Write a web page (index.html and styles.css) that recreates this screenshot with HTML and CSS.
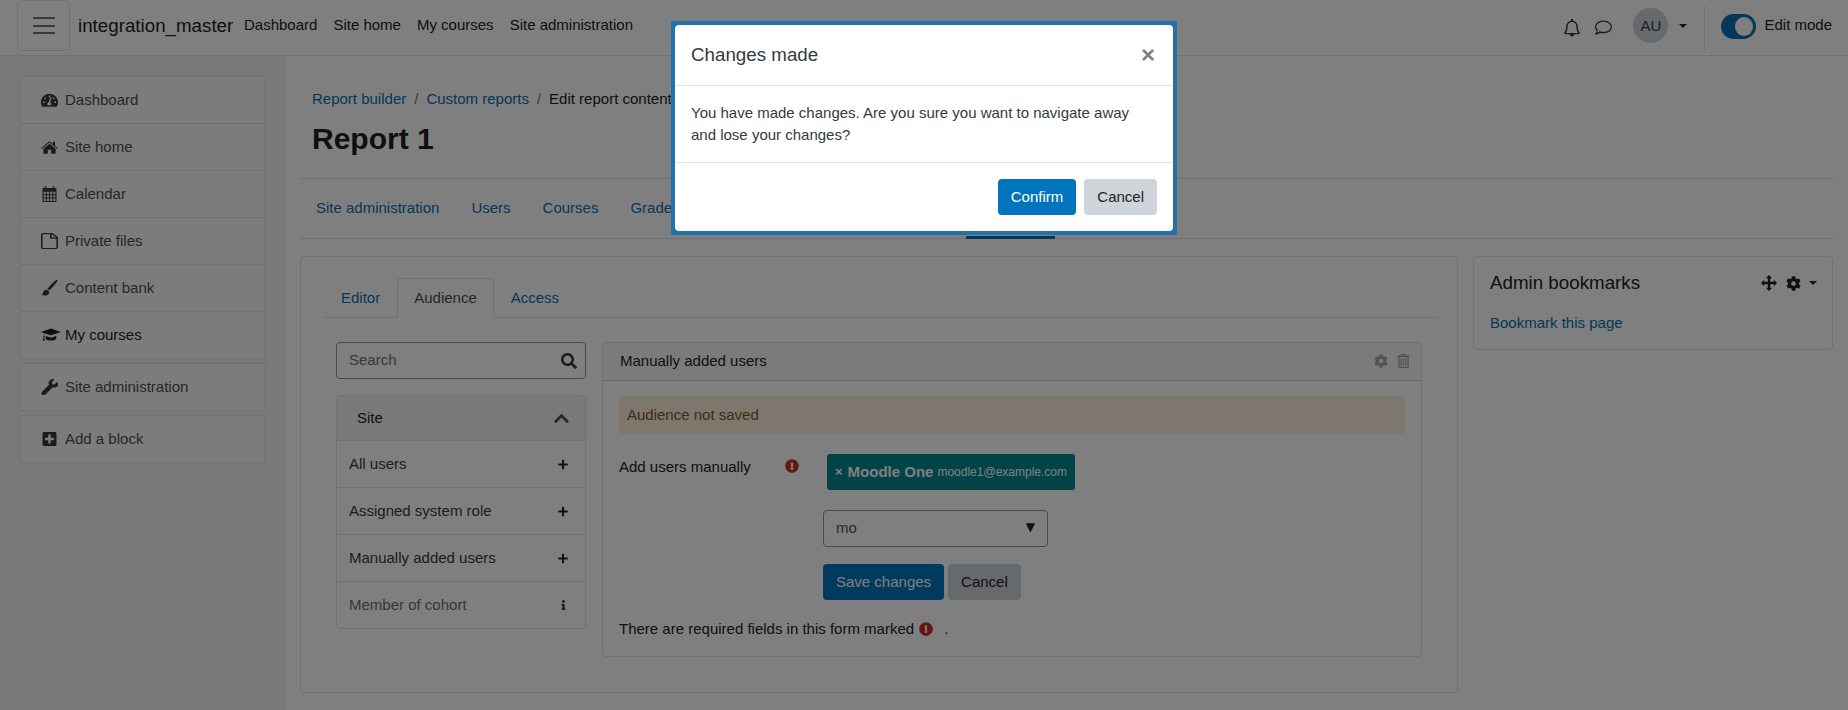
FILE: index.html
```html
<!DOCTYPE html>
<html lang="en">
<head>
<meta charset="utf-8">
<title>Edit report content</title>
<link rel="stylesheet" href="styles.css">
</head>
<body>
<svg class="defs" aria-hidden="true">
  <symbol id="i-gauge" viewBox="0 0 576 512"><path d="M288 40C129 40 0 169 0 328c0 53 14 102 39 145 6 9 16 15 27 15h444c11 0 21-6 27-15 25-43 39-92 39-145C576 169 447 40 288 40zm0 64c18 0 32 14 32 32s-14 32-32 32-32-14-32-32 14-32 32-32zM96 360c-18 0-32-14-32-32s14-32 32-32 32 14 32 32-14 32-32 32zm48-128c-18 0-32-14-32-32s14-32 32-32 32 14 32 32-14 32-32 32zm204 202H228c-8-12-12-26-12-42 0-33 21-62 50-73l50-150c4-12 17-19 30-15 13 4 19 17 15 30l-50 150c22 13 37 36 37 58 0 16-4 30 0 42zm84-202c-18 0-32-14-32-32s14-32 32-32 32 14 32 32-14 32-32 32zm48 128c-18 0-32-14-32-32s14-32 32-32 32 14 32 32-14 32-32 32z"/></symbol>
  <symbol id="i-home" viewBox="0 0 576 512"><path d="M288 60 8 290l22 28 258-212 258 212 22-28-94-77V80h-72v73zM288 146 80 316v156c0 9 7 16 16 16h136V352h112v136h136c9 0 16-7 16-16V316z"/></symbol>
  <symbol id="i-cal" viewBox="0 0 448 512"><path fill-rule="evenodd" d="M96 0c13 0 24 11 24 24v40h208V24c0-13 11-24 24-24s24 11 24 24v40h36c24 0 36 16 36 36v376c0 20-16 36-36 36H36c-20 0-36-16-36-36V100c0-20 16-36 36-36h36V24C72 11 83 0 96 0zM36 180v80h72v-80zm104 0v80h72v-80zm104 0v80h72v-80zm104 0v80h64v-80zM36 292v76h72v-76zm104 0v76h72v-76zm104 0v76h72v-76zm104 0v76h64v-76zM36 400v76h72v-76zm104 0v76h72v-76zm104 0v76h72v-76zm104 0v76h64v-76z"/></symbol>
  <symbol id="i-file" viewBox="0 0 384 512" preserveAspectRatio="none"><path d="M369 113 271 15C261 5 249 0 236 0H48C22 0 0 22 0 48v416c0 26 22 48 48 48h288c26 0 48-22 48-48V147c0-13-5-25-15-34zm-23 34H240V41zM336 476H48c-7 0-12-5-12-12V48c0-7 5-12 12-12h156v116c0 17 15 31 32 31h112v281c0 7-5 12-12 12z"/></symbol>
  <symbol id="i-brush" viewBox="0 0 512 512"><path d="M168 300c-52 4-100 30-114 90-6 28-28 52-54 62 40 32 150 70 210 20 36-30 44-72 30-104zM504 8c-12-12-30-10-44 0C370 78 270 180 190 280l60 50c90-84 210-210 260-290 8-12 6-24-6-32z"/></symbol>
  <symbol id="i-cap" viewBox="0 0 640 512"><path d="M320 50 0 160l110 36c-10 22-16 48-18 76-12 6-20 18-20 32 0 12 6 22 14 29L60 440h70l-26-107c8-7 14-17 14-29 0-14-8-26-20-32 2-26 10-50 24-68l198 62 320-106zM150 290v70c0 40 76 74 170 74s170-34 170-74v-70l-170 54z"/></symbol>
  <symbol id="i-wrench" viewBox="0 0 512 512"><path d="M507 109c-2-9-13-12-20-6l-74 74-68-11-11-68 74-74c7-7 3-18-6-20-47-12-99 0-136 37-40 40-50 98-32 147L26 396c-35 35-35 91 0 126s91-19 126-54l208-208c49 18 107 8 147-32 37-37 49-90 0-119z"/></symbol>
  <symbol id="i-plusbox" viewBox="0 0 448 512"><path d="M400 32H48C22 32 0 54 0 80v352c0 26 22 48 48 48h352c26 0 48-22 48-48V80c0-26-22-48-48-48zm-32 252c0 7-5 12-12 12h-92v92c0 7-5 12-12 12h-56c-7 0-12-5-12-12v-92H92c-7 0-12-5-12-12v-56c0-7 5-12 12-12h92v-92c0-7 5-12 12-12h56c7 0 12 5 12 12v92h92c7 0 12 5 12 12z"/></symbol>
  <symbol id="i-search" viewBox="0 0 512 512"><path d="M505 442.7L405.3 343c-4.5-4.5-10.6-7-17-7H372c27.6-35.3 44-79.7 44-128C416 93.1 322.9 0 208 0S0 93.1 0 208s93.1 208 208 208c48.3 0 92.7-16.4 128-44v16.3c0 6.4 2.5 12.5 7 17l99.7 99.7c9.4 9.4 24.6 9.4 33.9 0l28.3-28.3c9.4-9.4 9.4-24.6.1-34zM208 336c-70.7 0-128-57.2-128-128 0-70.7 57.2-128 128-128 70.7 0 128 57.2 128 128 0 70.7-57.2 128-128 128z"/></symbol>
  <symbol id="i-up" viewBox="0 0 448 512"><path d="M240.971 130.524l194.343 194.343c9.373 9.373 9.373 24.569 0 33.941l-22.667 22.667c-9.357 9.357-24.522 9.375-33.901.04L224 227.495 69.255 381.516c-9.379 9.335-24.544 9.317-33.901-.04l-22.667-22.667c-9.373-9.373-9.373-24.569 0-33.941L207.03 130.525c9.372-9.373 24.568-9.373 33.941-.001z"/></symbol>
  <symbol id="i-plus" viewBox="0 0 448 512"><path d="M416 208H272V64c0-17.67-14.33-32-32-32h-32c-17.67 0-32 14.33-32 32v144H32c-17.67 0-32 14.33-32 32v32c0 17.67 14.33 32 32 32h144v144c0 17.67 14.33 32 32 32h32c17.67 0 32-14.33 32-32V304h144c17.67 0 32-14.33 32-32v-32c0-17.67-14.33-32-32-32z"/></symbol>
  <symbol id="i-info" viewBox="0 0 192 512"><path d="M20 424h20V280H20c-11 0-20-9-20-20v-48c0-11 9-20 20-20h112c11 0 20 9 20 20v212h20c11 0 20 9 20 20v48c0 11-9 20-20 20H20c-11 0-20-9-20-20v-48c0-11 9-20 20-20zM96 0C56 0 24 32 24 72s32 72 72 72 72-32 72-72S136 0 96 0z"/></symbol>
  <symbol id="i-cog" viewBox="0 0 512 512"><path d="M487.4 315.7l-42.6-24.6c4.3-23.2 4.3-47 0-70.2l42.6-24.6c4.9-2.8 7.1-8.6 5.5-14-11.1-35.6-30-67.8-54.7-94.6-3.8-4.1-10-5.1-14.8-2.3L380.8 110c-17.9-15.4-38.5-27.3-60.8-35.1V25.8c0-5.6-3.9-10.5-9.4-11.7-36.7-8.2-74.3-7.8-109.2 0-5.5 1.2-9.4 6.1-9.4 11.7V75c-22.2 7.9-42.8 19.8-60.8 35.1L88.7 85.5c-4.9-2.8-11-1.9-14.8 2.3-24.7 26.7-43.6 58.9-54.7 94.6-1.7 5.4.6 11.2 5.5 14L67.3 221c-4.3 23.2-4.3 47 0 70.2l-42.6 24.6c-4.9 2.8-7.1 8.6-5.5 14 11.1 35.6 30 67.8 54.7 94.6 3.8 4.1 10 5.1 14.8 2.3l42.6-24.6c17.9 15.4 38.5 27.3 60.8 35.1v49.2c0 5.6 3.9 10.5 9.4 11.7 36.7 8.2 74.3 7.8 109.2 0 5.5-1.2 9.4-6.1 9.4-11.7v-49.2c22.2-7.9 42.8-19.8 60.8-35.1l42.6 24.6c4.9 2.8 11 1.9 14.8-2.3 24.7-26.7 43.6-58.9 54.7-94.6 1.5-5.5-.7-11.3-5.6-14.1zM256 336c-44.1 0-80-35.9-80-80s35.9-80 80-80 80 35.9 80 80-35.9 80-80 80z"/></symbol>
  <symbol id="i-trash" viewBox="0 0 448 512"><path d="M160 0c-18 0-32 14-32 32v24H16C7 56 0 63 0 72v32c0 9 7 16 16 16h16v344c0 27 21 48 48 48h288c27 0 48-21 48-48V120h16c9 0 16-7 16-16V72c0-9-7-16-16-16H320V32c0-18-14-32-32-32zm8 40h112v16H168zM80 120h288v344H80zm48 48c-9 0-16 7-16 16v232c0 9 7 16 16 16h16c9 0 16-7 16-16V184c0-9-7-16-16-16zm88 0c-9 0-16 7-16 16v232c0 9 7 16 16 16h16c9 0 16-7 16-16V184c0-9-7-16-16-16zm88 0c-9 0-16 7-16 16v232c0 9 7 16 16 16h16c9 0 16-7 16-16V184c0-9-7-16-16-16z"/></symbol>
  <symbol id="i-move" viewBox="0 0 16 16"><path d="M8 0l3.200 3.200H9.200V6.800H12.800V4.800L16 8l-3.200 3.200v-2H9.200v3.600h2L8 16l-3.200-3.200h2V9.200H3.200v2L0 8l3.200-3.200v2h3.600V3.200h-2z"/></symbol>
  <symbol id="i-err" viewBox="0 0 512 512"><path d="M504 256c0 136.997-111.043 248-248 248S8 392.997 8 256C8 119.083 119.043 8 256 8s248 111.083 248 248zm-248 50c-25.405 0-46 20.595-46 46s20.595 46 46 46 46-20.595 46-46-20.595-46-46-46zm-43.673-165.346l7.418 136c.347 6.364 5.609 11.346 11.982 11.346h48.546c6.373 0 11.635-4.982 11.981-11.346l7.418-136c.375-6.874-5.098-12.654-11.982-12.654h-63.383c-6.884 0-12.356 5.78-11.981 12.654z"/></symbol>
  <symbol id="i-bell" viewBox="0 0 448 512"><path d="M224 0c-18 0-32 14-32 32v20C110 67 60 130 60 208c0 100-26 140-50 170-6 7-10 14-10 22 0 18 14 32 32 32h128c0 35 29 64 64 64s64-29 64-64h128c18 0 32-14 32-32 0-8-4-15-10-22-24-30-50-70-50-170 0-78-50-141-132-156V32c0-18-14-32-32-32zM52 396c26-36 48-84 48-188 0-70 54-122 124-122s124 52 124 122c0 104 22 152 48 188z"/></symbol>
  <symbol id="i-chat" viewBox="0 0 512 512"><path d="M256 48C115 48 0 135 0 240c0 44 20 85 54 117-10 40-40 72-54 88-6 8-2 19 8 19 60 0 110-24 140-46 33 11 69 14 108 14 141 0 256-87 256-192S397 48 256 48zm0 336c-36 0-66-4-100-16l-18-6-16 12c-18 14-42 26-70 34 12-16 24-38 30-62l6-24-18-17C42 278 38 258 38 240c0-84 98-154 218-154s218 70 218 154-98 144-218 144z"/></symbol>
</svg>

<header class="navbar">
  <button class="burger" type="button" aria-label="Menu"><span></span><span></span><span></span></button>
  <a class="brand">integration_master</a>
  <nav class="topnav">
    <a>Dashboard</a><a>Site home</a><a>My courses</a><a>Site administration</a>
  </nav>
  <div class="usernav">
    <svg class="nav-bell"><use href="#i-bell"/></svg>
    <svg class="nav-chat"><use href="#i-chat"/></svg>
    <span class="avatar">AU</span>
    <span class="caret nav-caret"></span>
    <span class="nav-divider"></span>
    <span class="toggle"><span class="knob"></span></span>
    <span class="edit-label">Edit mode</span>
  </div>
</header>

<div class="layout">
  <aside class="sidebar">
    <ul class="side-block">
      <li><svg class="side-ic"><use href="#i-gauge"/></svg>Dashboard</li>
      <li><svg class="side-ic"><use href="#i-home"/></svg>Site home</li>
      <li><svg class="side-ic"><use href="#i-cal"/></svg>Calendar</li>
      <li><svg class="side-ic"><use href="#i-file"/></svg>Private files</li>
      <li><svg class="side-ic"><use href="#i-brush"/></svg>Content bank</li>
      <li class="side-dark"><svg class="side-ic"><use href="#i-cap"/></svg>My courses</li>
    </ul>
    <ul class="side-block">
      <li><svg class="side-ic"><use href="#i-wrench"/></svg>Site administration</li>
    </ul>
    <ul class="side-block">
      <li><svg class="side-ic"><use href="#i-plusbox"/></svg>Add a block</li>
    </ul>
  </aside>

  <main class="main">
    <ol class="breadcrumb">
      <li><a>Report builder</a></li>
      <li class="sep">/</li>
      <li><a>Custom reports</a></li>
      <li class="sep">/</li>
      <li>Edit report content</li>
    </ol>
    <h1 class="title">Report 1</h1>

    <nav class="secnav">
      <a>Site administration</a><a>Users</a><a>Courses</a><a>Grades</a><span class="secnav-active"></span>
    </nav>

    <div class="columns">
      <section class="card">
        <div class="tabs">
          <a class="tab">Editor</a>
          <a class="tab tab-active">Audience</a>
          <a class="tab">Access</a>
        </div>
        <div class="editor">
          <div class="leftcol">
            <div class="search">
              <span class="search-ph">Search</span>
              <svg class="search-ic"><use href="#i-search"/></svg>
            </div>
            <div class="list">
              <div class="list-head"><span>Site</span><svg class="chev"><use href="#i-up"/></svg></div>
              <div class="list-row"><span>All users</span><svg class="row-ic"><use href="#i-plus"/></svg></div>
              <div class="list-row"><span>Assigned system role</span><svg class="row-ic"><use href="#i-plus"/></svg></div>
              <div class="list-row"><span>Manually added users</span><svg class="row-ic"><use href="#i-plus"/></svg></div>
              <div class="list-row list-row-muted"><span>Member of cohort</span><svg class="row-ic row-info"><use href="#i-info"/></svg></div>
            </div>
          </div>
          <div class="panel">
            <div class="panel-head">
              <span>Manually added users</span>
              <span class="panel-tools">
                <svg class="tool-cog"><use href="#i-cog"/></svg>
                <svg class="tool-trash"><use href="#i-trash"/></svg>
              </span>
            </div>
            <div class="panel-body">
              <div class="alert">Audience not saved</div>
              <div class="form-row">
                <div class="form-label"><span class="label-text">Add users manually</span><svg class="err"><use href="#i-err"/></svg></div>
                <div class="chip"><span class="chip-x">×</span><b class="chip-name">Moodle One</b><small class="chip-mail">moodle1@example.com</small></div>
              </div>
              <div class="form-indent">
                <div class="select"><span class="select-val">mo</span><span class="select-arrow">▼</span></div>
                <div class="form-btns">
                  <button class="btn btn-primary" type="button">Save changes</button>
                  <button class="btn btn-secondary" type="button">Cancel</button>
                </div>
              </div>
              <p class="required">There are required fields in this form marked<svg class="err err-inline"><use href="#i-err"/></svg><span class="req-dot">.</span></p>
            </div>
          </div>
        </div>
      </section>

      <aside class="bookmarks">
        <div class="bm-head">
          <h2 class="bm-title">Admin bookmarks</h2>
          <span class="bm-tools">
            <svg class="bm-move"><use href="#i-move"/></svg>
            <svg class="bm-cog"><use href="#i-cog"/></svg>
            <span class="caret"></span>
          </span>
        </div>
        <a class="bm-link">Bookmark this page</a>
      </aside>
    </div>
  </main>
</div>

<div class="backdrop"></div>
<div class="modal-wrap">
  <div class="modal-ring">
    <div class="modal" role="dialog">
      <div class="modal-head">
        <h5 class="modal-title">Changes made</h5>
        <span class="modal-close">×</span>
      </div>
      <div class="modal-body">You have made changes. Are you sure you want to navigate away and lose your changes?</div>
      <div class="modal-foot">
        <button class="btn btn-primary" type="button">Confirm</button>
        <button class="btn btn-secondary" type="button">Cancel</button>
      </div>
    </div>
  </div>
</div>
</body>
</html>
```
FILE: styles.css
```css
* { box-sizing: border-box; }
html, body { margin: 0; height: 710px; overflow: hidden; }
body { font: 15px/22.5px "Liberation Sans", Arial, sans-serif; color: #1d2125; background: #fff; }
a { color: #0a6fb5; text-decoration: none; }
ul, ol { list-style: none; margin: 0; padding: 0; }
svg { display: block; fill: currentColor; }
.defs { position: absolute; width: 0; height: 0; }

/* top bar */
.navbar { display: flex; align-items: flex-start; height: 56px; border-bottom: 1px solid #dee2e6; background: #fff; padding-left: 17px; }
.burger { width: 53px; height: 51px; padding: 0 15px; margin: 0; display: flex; flex-direction: column; justify-content: center; gap: 5.5px; background: transparent; border: 1px solid #dee2e6; border-top-color: #e9ecef; border-radius: 5px; }
.burger span { display: block; width: 22px; height: 2px; background: #6a737b; }
.brand { color: #1d2125; font-size: 18.75px; line-height: 28px; margin: 12px 0 0 8px; width: 166px; white-space: nowrap; }
.topnav { display: flex; gap: 16px; margin-top: 14px; }
.topnav a { color: #1d2125; white-space: nowrap; }
.usernav { margin-left: auto; display: flex; align-items: center; height: 55px; color: #373a3c; padding-right: 16px; }
.nav-bell { width: 16px; height: 18px; margin-right: 15px; color: #343a40; }
.nav-chat { width: 17px; height: 17px; margin-right: 21px; color: #343a40; }
.avatar { width: 35px; height: 35px; border-radius: 50%; background: #ced4da; display: flex; align-items: center; justify-content: center; margin-top: -4px; color: #373a3c; padding-top: 1px; }
.caret { display: inline-block; width: 0; height: 0; border-left: 4.5px solid transparent; border-right: 4.5px solid transparent; border-top: 4.5px solid #1d2125; }
.nav-caret { margin: 0 0 3px 11px; }
.nav-divider { width: 1px; height: 44px; background: #dee2e6; margin: 0 16px 0 17px; }
.toggle { width: 35px; height: 25px; border-radius: 13px; background: #0a6fb5; padding: 3px 3px; display: flex; justify-content: flex-end; margin: -2px 8px 0 0; }
.knob { width: 18px; height: 19px; border-radius: 50%; background: #fff; }
.edit-label { color: #1d2125; margin-top: -5px; white-space: nowrap; }

/* layout */
.layout { display: flex; height: 654px; }
.sidebar { width: 285px; flex: none; background: #f2f2f2; padding: 20px 20px 0; }
.side-block { background: #f8f9fa; border: 1px solid #dee2e6; margin-bottom: 4px; width: 245px; }
.side-block li { display: flex; align-items: center; height: 47px; color: #495057; border-top: 1px solid #dee2e6; padding-left: 20px; }
.side-block li:first-child { border-top: 0; height: 46px; }
.side-dark { color: #1d2125 !important; }
.side-ic { width: 17px; height: 16px; margin-right: 7px; flex: none; color: #343a40; }
.side-dark .side-ic { width: 20px; margin-right: 4px; color: #1d2125; }

.main { flex: 1; min-width: 0; padding: 32px 15px 0; }
.breadcrumb { display: flex; height: 22px; padding-left: 12px; }
.breadcrumb .sep { margin: 0 8px; color: #6a737b; }
.title { margin: 11px 0 21px 12px; font-size: 30px; line-height: 36px; font-weight: 700; color: #1d2125; }
.secnav { display: flex; height: 61px; align-items: center; border-top: 1px solid #dee2e6; border-bottom: 1px solid #dee2e6; padding-left: 16px; gap: 32px; }
.secnav a { white-space: nowrap; }
.secnav-active { align-self: flex-end; width: 89px; height: 3px; margin: 0 0 -1px 254px; background: #0a6fb5; }

.columns { display: flex; gap: 15px; margin-top: 17px; align-items: flex-start; }
.card { flex: 1; min-width: 0; background: #fff; border: 1px solid #dee2e6; border-radius: 4px; padding: 21px 20px 35px 23px; }
.tabs { display: flex; height: 40px; border-bottom: 1px solid #dee2e6; }
.tab { padding: 8px 16px 0; height: 40px; border: 1px solid transparent; }
.tab:first-child { padding-left: 17px; padding-right: 16px; border-left: 0; }
.tab-active { color: #495057; background: #fff; border-color: #dee2e6 #dee2e6 #fff; border-radius: 4px 4px 0 0; }
.editor { display: flex; gap: 16px; margin: 24px 0 0 12px; align-items: flex-start; }
.leftcol { width: 250px; flex: none; }
.search { display: flex; align-items: center; justify-content: space-between; height: 37px; border: 1px solid #8f959e; border-radius: 4px; padding: 0 8px 0 12px; }
.search-ph { color: #6a737b; }
.search-ic { width: 16px; height: 16px; color: #343a40; }
.list { margin-top: 16px; border: 1px solid #dee2e6; border-radius: 4px; }
.list-head { display: flex; align-items: center; justify-content: space-between; height: 45px; background: #eff4f2; padding: 0 16px 0 20px; border-bottom: 1px solid #dee2e6; }
.chev { width: 15px; height: 17px; color: #495057; }
.list-row { display: flex; align-items: center; justify-content: space-between; height: 47px; padding: 0 17px 0 12px; color: #343a40; border-top: 1px solid #dee2e6; }
.list-head + .list-row { border-top: 0; height: 46px; }
.list-row-muted { color: #6a737b; }
.row-ic { width: 10px; height: 11px; color: #1d2125; }
.row-info { width: 5px; height: 10px; margin-right: 2px; color: #343a40; }

.panel { width: 820px; flex: none; border: 1px solid #dee2e6; border-radius: 4px; }
.panel-head { display: flex; align-items: center; justify-content: space-between; height: 38px; background: #f7f7f7; border-bottom: 1px solid #ced4da; padding: 0 11px 1px 17px; border-radius: 4px 4px 0 0; }
.panel-tools { display: flex; align-items: center; gap: 9px; color: #a0a4a8; }
.tool-cog { width: 14px; height: 14px; }
.tool-trash { width: 13px; height: 14px; }
.panel-body { padding: 15px 16px 15px; }
.alert { height: 38px; line-height: 38px; padding-left: 8px; background: #fcefdc; color: #7d5a29; border-radius: 4px; }
.form-row { display: flex; margin-top: 20px; }
.form-label { width: 208px; flex: none; display: flex; align-items: flex-start; padding-top: 2px; }
.label-text { width: 166px; }
.err { width: 14px; height: 14px; color: #ca3120; margin-top: 3px; }
.chip { display: flex; align-items: center; height: 36px; padding: 0 8px; background: #03868f; color: #fff; border-radius: 3px; white-space: nowrap; }
.chip-x { font-weight: 700; font-size: 13px; margin-right: 5px; }
.chip-name { font-weight: 700; font-size: 15px; margin-right: 4px; }
.chip-mail { font-size: 12px; }
.form-indent { margin-left: 204px; }
.select { display: flex; align-items: center; justify-content: space-between; width: 225px; height: 37px; margin-top: 20px; border: 1px solid #8f959e; border-radius: 4px; padding: 0 12px; color: #495057; }
.select-arrow { color: #1d2125; font-size: 12px; font-family: "DejaVu Sans", sans-serif; margin-top: -3px; }
.form-btns { display: flex; gap: 4px; margin-top: 17px; }
.required { display: flex; align-items: flex-start; margin: 18px 0 0; }
.err-inline { margin: 4px 0 0 5px; }
.req-dot { margin-left: 11px; }

.btn { font: inherit; height: 36px; padding: 0 12px; border: 1px solid transparent; border-radius: 4px; cursor: pointer; }
.btn-primary { background: #0174be; color: #fff; }
.btn-secondary { background: #ced4da; color: #1d2125; }

.bookmarks { width: 360px; flex: none; height: 94px; background: #fff; border: 1px solid #dee2e6; border-radius: 4px; padding: 0 15px 0 16px; }
.bm-head { display: flex; justify-content: space-between; align-items: center; height: 52px; }
.bm-title { margin: 0; font-size: 18.75px; line-height: 28px; font-weight: 400; color: #1d2125; }
.bm-tools { display: flex; align-items: center; color: #1d2125; }
.bm-move { width: 16px; height: 16px; margin-right: 9px; }
.bm-cog { width: 15px; height: 15px; margin-right: 8px; }
.bm-link { display: block; margin-top: 3px; }

/* modal */
.backdrop { position: fixed; inset: 0; background: rgba(0, 0, 0, .5); }
.modal-wrap { position: fixed; inset: 0; display: flex; justify-content: center; align-items: flex-start; padding-top: 21px; }
.modal-ring { padding: 4px; background: #2472ab; }
.modal { width: 498px; background: #fff; border-radius: 4px; }
.modal-head { display: flex; align-items: center; justify-content: space-between; height: 61px; padding: 0 16px; border-bottom: 1px solid #dee2e6; }
.modal-title { margin: 0; font-size: 18.75px; line-height: 28px; font-weight: 400; color: #343a40; }
.modal-close { font-size: 24px; font-weight: 700; line-height: 22px; color: #7c8288; margin-right: 2px; }
.modal-body { padding: 16px 16px 0; height: 76px; line-height: 22px; color: #343a40; }
.modal-foot { display: flex; justify-content: flex-end; gap: 8px; padding: 16px; border-top: 1px solid #dee2e6; }
```
